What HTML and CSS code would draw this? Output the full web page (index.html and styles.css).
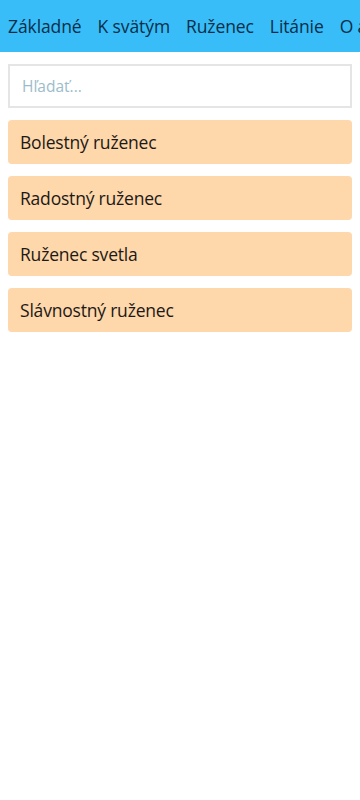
FILE: index.html
```html
<!DOCTYPE html>
<html lang="sk">
<head>
<meta charset="utf-8">
<meta name="viewport" content="width=device-width, initial-scale=1">
<title>Modlitby</title>
<link rel="stylesheet" href="styles.css">
</head>
<body>
<header class="topbar">
  <nav class="nav">
    <a class="nav-item" href="#">Základné</a>
    <a class="nav-item" href="#">K svätým</a>
    <a class="nav-item" href="#">Ruženec</a>
    <a class="nav-item" href="#">Litánie</a>
    <a class="nav-item" href="#">O aplikácii</a>
  </nav>
</header>
<main class="content">
  <input class="search" type="text" placeholder="Hľadať...">
  <ul class="list">
    <li class="card">Bolestný ruženec</li>
    <li class="card">Radostný ruženec</li>
    <li class="card">Ruženec svetla</li>
    <li class="card">Slávnostný ruženec</li>
  </ul>
</main>
</body>
</html>
```
FILE: styles.css
```css
* { box-sizing: border-box; }
html, body { margin: 0; padding: 0; background: #ffffff; }
body {
  font-family: "Open Sans", "Noto Sans", sans-serif;
  color: #1c1917;
  width: 360px;
  overflow-x: hidden;
}
.topbar {
  background: #38bdf8;
  height: 52px;
  overflow: hidden;
}
.nav {
  display: flex;
  align-items: center;
  height: 52px;
  white-space: nowrap;
}
.nav-item {
  flex: none;
  padding: 0 8px;
  font-size: 17.5px;
  letter-spacing: -0.1px;
  color: #082f49;
  text-decoration: none;
}
.content {
  padding: 12px 8px;
  display: flex;
  flex-direction: column;
  gap: 12px;
}
.search {
  display: block;
  width: 100%;
  height: 44px;
  margin: 0;
  padding: 0 12px;
  border: 2px solid #e5e5e5;
  border-radius: 0;
  font-family: inherit;
  font-size: 15.5px;
  color: #1c1917;
  outline: none;
  background: #fff;
}
.search::placeholder { color: #9cbccb; }
.list {
  list-style: none;
  margin: 0;
  padding: 0;
  display: flex;
  flex-direction: column;
  gap: 12px;
}
.card {
  background: #fed7aa;
  border-radius: 4px;
  height: 44px;
  display: flex;
  align-items: center;
  padding: 0 12px;
  font-size: 17.5px;
  letter-spacing: -0.2px;
  color: #1c1917;
}
```
